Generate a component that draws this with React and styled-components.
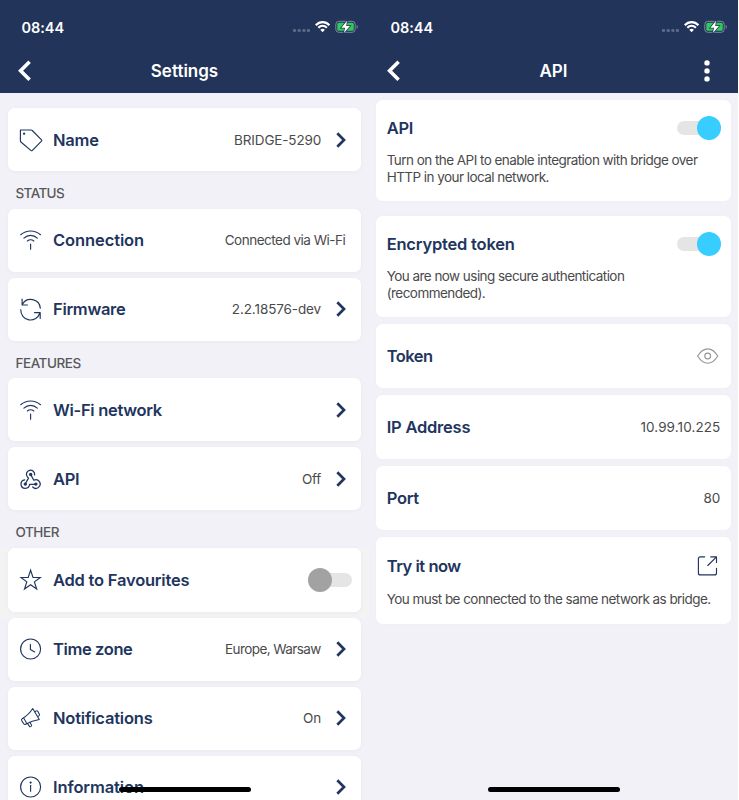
import React from "react";
import styled, { createGlobalStyle, css } from "styled-components";

const NAVY = "#22345a";
const INK = "#21355e";

const GlobalStyle = createGlobalStyle`
  * { box-sizing: border-box; }
  html, body { margin: 0; padding: 0; }
  body { width: 739px; height: 800px; overflow: hidden; background: #fff; }
`;

const Page = styled.main`
  display: flex;
  width: 738.5px;
  height: 800px;
  font-family: Inter, "Liberation Sans", sans-serif;
  overflow: hidden;
`;

const Screen = styled.section`
  position: relative;
  flex: none;
  display: flex;
  flex-direction: column;
  width: 369px;
  height: 800px;
  overflow: hidden;
  background: #f2f1f7;
`;

const Header = styled.header`
  flex: none;
  height: 92.5px;
  background: ${NAVY};
  color: #fff;
`;

const StatusBar = styled.div`
  display: flex;
  align-items: center;
  justify-content: space-between;
  height: 54px;
  padding: 0 11px 0 21.5px;
`;

const Clock = styled.time`
  font-size: 14.5px;
  font-weight: 600;
  letter-spacing: -0.05px;
`;

const NavBar = styled.div`
  display: grid;
  grid-template-columns: 48px 1fr 48px;
  align-items: center;
  height: 34px;
`;

const NavTitle = styled.h1`
  margin: 0;
  text-align: center;
  font-size: 17px;
  font-weight: 600;
  line-height: 24px;
`;

const NavButton = styled.button`
  display: flex;
  align-items: center;
  justify-content: center;
  width: 48px;
  height: 34px;
  padding: 0 ${(p) => p.$inset || 0}px 0 0;
  border: 0;
  background: none;
  color: inherit;
`;

const Card = styled.div`
  display: flex;
  align-items: center;
  flex: none;
  height: ${(p) => p.$height || 62.7}px;
  border-radius: 6.5px;
  background: #fff;
  box-shadow: 0 1px 4px rgba(60, 60, 90, 0.04);
`;

const SettingsBody = styled.div`
  display: flex;
  flex-direction: column;
  gap: 6.3px;
  padding-top: 15.9px;
`;

const Band = styled.div`
  display: flex;
  flex-direction: column;
  gap: 6.3px;
  padding: 0 7.6px 0 8px;
  ${(p) =>
    p.$tinted &&
    css`
      padding-bottom: 6.3px;
      margin-bottom: -6.3px;
      background: #f3f3f4;
    `}
`;

const SectionTitle = styled.h2`
  margin: -6.3px 0;
  padding-left: 15.5px;
  height: 37.8px;
  font-size: 13.5px;
  font-weight: 550;
  line-height: ${(p) => p.$line || 45}px;
  color: #58585b;
  letter-spacing: ${(p) => p.$track}px;
`;

const RowIcon = styled.span`
  display: flex;
  flex: none;
  width: 24px;
  margin: 0 11px 0 10px;
  color: ${INK};
`;

const Label = styled.span`
  flex: 1;
  font-size: 16.5px;
  font-weight: 600;
  line-height: 24px;
  white-space: nowrap;
  color: ${INK};
  letter-spacing: ${(p) => p.$track}px;
`;

const Value = styled.span`
  font-size: 13.5px;
  font-weight: 430;
  line-height: 20px;
  white-space: nowrap;
  color: #4a4a4c;
  letter-spacing: ${(p) => p.$track || 0}px;
  margin-right: ${(p) => p.$edge - (p.$track || 0)}px;
`;

const Chevron = styled.span`
  display: flex;
  flex: none;
  width: 12px;
  margin-right: 14.6px;
  color: ${INK};
`;

const Switch = styled.span`
  display: flex;
  flex: none;
  align-items: center;
  justify-content: ${(p) => (p.$on ? "flex-end" : "flex-start")};
  width: 43.5px;
  height: 14px;
  margin-right: 9.7px;
  border-radius: 7px;
  background: #e5e5e5;
`;

const Knob = styled.span`
  flex: none;
  width: 24px;
  height: 24px;
  border-radius: 50%;
  background: ${(p) => (p.$on ? "#37cdff" : "#a2a2a2")};
`;

const ApiBody = styled.div`
  display: flex;
  flex-direction: column;
  gap: 7px;
  padding: 7.5px 7.5px 0 7px;
`;

const Panel = styled(Card)`
  flex-direction: column;
  align-items: stretch;
  justify-content: flex-start;
  padding-top: ${(p) => p.$top || 0}px;
  padding-left: 10.7px;
  box-shadow: 0 0 2px rgba(60, 60, 90, 0.03);
  margin-bottom: ${(p) => p.$after || 0}px;
`;

const PanelRow = styled.div`
  display: flex;
  align-items: center;
  flex: none;
  height: ${(p) => p.$height || 64}px;
`;

const PanelIcon = styled.span`
  display: flex;
  flex: none;
  width: 24px;
  margin-right: 11.3px;
`;

const Description = styled.p`
  margin: ${(p) => p.$gap}px 0 0;
  font-size: 13.5px;
  font-weight: 430;
  line-height: 17px;
  letter-spacing: -0.55px;
  white-space: pre-line;
  color: #4a4a4c;
`;

const HomeIndicator = styled.div`
  position: absolute;
  left: 119px;
  bottom: 8px;
  width: 132px;
  height: 5px;
  border-radius: 3px;
  background: #000;
`;

const LineIcon = ({ children, width = 1.15, join = "round" }) => (
  <svg
    width="24"
    height="24"
    viewBox="-0.5 0 24 24"
    overflow="visible"
    fill="none"
    stroke="currentColor"
    strokeWidth={width}
    strokeLinecap="round"
    strokeLinejoin={join}
  >
    {children}
  </svg>
);

const TagIcon = () => (
  <LineIcon>
    <path d="M1.9 2H12.6Q13.3 2 13.8 2.5L23 11.8Q23.6 12.5 23 13.2L13.9 22.4Q13.1 23.1 12.3 22.4L2.4 14Q1.9 13.5 1.9 12.9Z" />
    <circle cx="5.6" cy="5.7" r=".55" fill="currentColor" />
  </LineIcon>
);

const AntennaIcon = () => (
  <LineIcon>
    <path d="M2.2 6.7Q6.5 3 12.1 3T22 6.7M5.4 10.1Q8.3 7.3 12.1 7.3T18.8 10.1M8.9 13Q10.3 11.7 12.1 11.7T15.3 13M12.1 16V21.2" />
  </LineIcon>
);

const SyncIcon = () => (
  <LineIcon>
    <path d="M3.6 2.1V8H8.9M3.8 7.4A9.6 9.6 0 0 1 21.8 11.2M21.7 21.4V15.6H16M21.3 16A9.7 9.7 0 0 1 2.3 12.7" />
  </LineIcon>
);

const WebhookIcon = () => (
  <LineIcon width={1.25}>
    <path d="M8.9 9.9A4.1 4.1 0 1 1 16.1 7.9M8.9 9.9L10 11.1L6.8 16.8" />
    <path d="M12.2 7.5L15.3 13.2A4.3 4.3 0 1 1 14.2 20" />
    <path d="M6.2 12.8A4.3 4.3 0 1 0 11.1 17.3H17" />
    <circle cx="12.2" cy="7.5" r="1.1" fill="currentColor" />
    <circle cx="6.8" cy="17.1" r="1.1" fill="currentColor" />
    <circle cx="17.4" cy="17.1" r="1.1" fill="currentColor" />
  </LineIcon>
);

const StarIcon = () => (
  <LineIcon join="miter">
    <path d="M12.1 2.2L14.5 9.5H21.8L15.9 13.9L18.2 21L12.1 16.7L6 21L8.3 13.9L2.5 9.5H9.7Z" />
  </LineIcon>
);

const TimeIcon = () => (
  <LineIcon>
    <circle cx="12.1" cy="12" r="10" />
    <path d="M11.9 7.4V12.4L16.2 15" />
  </LineIcon>
);

const MegaphoneIcon = () => (
  <LineIcon width={1.05}>
    <path d="M14.2 2.6L20.8 13.4Q13.5 14.5 7.2 18.2Q6 18.8 5.2 17.7L3.2 14.6Q2.6 13.5 3.7 12.8Q10.5 8.7 14.2 2.6Z" />
    <path d="M5.2 12.1L8.3 17.5M9 17.4L10.9 20.4Q11.3 21 12 20.6L12.8 20.1Q13.4 19.7 13 19.1L11.4 16.3M16.2 5.7L17.8 4.9Q18.8 4.6 19.4 5.5L20.9 8.2Q21.3 9 20.6 9.6L19.2 10.7" />
  </LineIcon>
);

const InfoIcon = () => (
  <LineIcon>
    <circle cx="12.1" cy="12" r="10" />
    <path d="M12.1 10.3V16.3" />
    <circle cx="12.1" cy="7.5" r=".55" fill="currentColor" />
  </LineIcon>
);

const EyeIcon = () => (
  <LineIcon>
    <g stroke="#97979a">
      <path d="M2.1 12Q6.6 4.8 12.2 4.8T22.3 12Q17.8 19.2 12.2 19.2T2.1 12Z" />
      <circle cx="12.2" cy="12" r="2.9" />
    </g>
  </LineIcon>
);

const ShareIcon = () => (
  <LineIcon>
    <g stroke={INK}>
      <path d="M9.2 2.8H4.9Q2.9 2.8 2.9 4.8V18.9Q2.9 20.9 4.9 20.9H19Q21 20.9 21 18.9V14.2M15.2 2.8H21V8.6M21 2.8L12.3 11.5" />
    </g>
  </LineIcon>
);

const ChevronIcon = () => (
  <svg width="12" height="18" viewBox="0 0 12 18" fill="none">
    <path d="M2.3 2.3L9 9L2.3 15.7" stroke="currentColor" strokeWidth="2.7" />
  </svg>
);

const BackIcon = () => (
  <svg width="16" height="24" viewBox="0 0 16 24" fill="none">
    <path d="M13.6 2.8L4.6 11.8L13.6 20.8" stroke="currentColor" strokeWidth="3.6" />
  </svg>
);

const MoreIcon = () => (
  <svg width="8" height="24" viewBox="0 0 8 24" fill="currentColor">
    <circle cx="4" cy="3.9" r="2.7" />
    <circle cx="4" cy="11.9" r="2.7" />
    <circle cx="4" cy="19.9" r="2.7" />
  </svg>
);

const StatusIcons = () => (
  <svg width="66" height="14" viewBox="0 0 66 14" fill="none">
    <g fill="#596887">
      <rect x="0.9" y="9" width="3.2" height="3" rx="1" />
      <rect x="5.6" y="9" width="3.2" height="3" rx="1" />
      <rect x="10.3" y="9" width="3.2" height="3" rx="1" />
      <rect x="14.8" y="9" width="3.2" height="3" rx="1" />
    </g>
    <g stroke="#fff" strokeWidth="2.1">
      <path d="M23.8 5.2Q26.7 2.1 30.6 2.1T37.4 5.2" />
      <path d="M26.3 7.8Q28.2 5.8 30.6 5.8T34.9 7.8" />
    </g>
    <path d="M28.3 9.8Q30.6 7.8 32.9 9.8L30.6 12.2Z" fill="#fff" />
    <rect x="43.8" y="1.3" width="19.4" height="11" rx="3" stroke="#7d899f" />
    <path d="M65 5.3Q66 6.9 65 8.5Z" fill="#7d899f" stroke="#7d899f" strokeWidth=".5" />
    <rect x="45.3" y="2.8" width="16.4" height="8" rx="1.5" fill="#31cb5b" />
    <path d="M55 0.8L49.4 7.7H53L52 13L58 6H54.2Z" fill="#fff" stroke={NAVY} strokeWidth="1.5" paintOrder="stroke" />
  </svg>
);

const ScreenHeader = ({ title, menu }) => (
  <Header>
    <StatusBar>
      <Clock>08:44</Clock>
      <StatusIcons />
    </StatusBar>
    <NavBar>
      <NavButton aria-label="Back"><BackIcon /></NavButton>
      <NavTitle>{title}</NavTitle>
      {menu && <NavButton $inset={15} aria-label="More"><MoreIcon /></NavButton>}
    </NavBar>
  </Header>
);

const Toggle = ({ on }) => (
  <Switch $on={on} role="switch" aria-checked={!!on}>
    <Knob $on={on} />
  </Switch>
);

const SettingRow = ({ icon: Icon, label, track, value, valueTrack, toggle, plain }) => (
  <Card $height={toggle ? 64 : 62.7}>
    <RowIcon><Icon /></RowIcon>
    <Label $track={track}>{label}</Label>
    {value && <Value $track={valueTrack} $edge={plain ? 15.7 : 13.6}>{value}</Value>}
    {toggle ? <Toggle /> : !plain && <Chevron><ChevronIcon /></Chevron>}
  </Card>
);

export default function App() {
  return (
    <>
      <GlobalStyle />
      <Page>
        <Screen>
          <ScreenHeader title="Settings" />
          <SettingsBody>
            <Band>
              <SettingRow icon={TagIcon} label="Name" track={-0.2} value="BRIDGE-5290" valueTrack={-0.15} />
            </Band>
            <SectionTitle $track={-0.62} $line={45.5}>STATUS</SectionTitle>
            <Band>
              <SettingRow icon={AntennaIcon} label="Connection" track={-0.1} value="Connected via Wi-Fi" valueTrack={-0.5} plain />
              <SettingRow icon={SyncIcon} label="Firmware" track={-0.3} value="2.2.18576-dev" valueTrack={-0.1} />
            </Band>
            <SectionTitle $track={-0.47} $line={44.5}>FEATURES</SectionTitle>
            <Band>
              <SettingRow icon={AntennaIcon} label="Wi-Fi network" track={-0.3} />
              <SettingRow icon={WebhookIcon} label="API" track={-0.3} value="Off" valueTrack={-0.3} />
            </Band>
            <SectionTitle $track={-0.45} $line={45.5}>OTHER</SectionTitle>
            <Band $tinted>
              <SettingRow icon={StarIcon} label="Add to Favourites" track={-0.22} toggle />
            </Band>
            <Band>
              <SettingRow icon={TimeIcon} label="Time zone" track={-0.38} value="Europe, Warsaw" valueTrack={-0.6} />
              <SettingRow icon={MegaphoneIcon} label="Notifications" track={-0.2} value="On" />
              <SettingRow icon={InfoIcon} label="Information" track={-0.1} />
            </Band>
          </SettingsBody>
          <HomeIndicator />
        </Screen>
        <Screen>
          <ScreenHeader title="API" menu />
          <ApiBody>
            <Panel $height={101} $top={12} $after={8.3}>
              <PanelRow $height={32}>
                <Label $track={-0.3}>API</Label>
                <Toggle on />
              </PanelRow>
              <Description $gap={8}>{"Turn on the API to enable integration with bridge over\nHTTP in your local network."}</Description>
            </Panel>
            <Panel $height={101} $top={12}>
              <PanelRow $height={32}>
                <Label $track={-0.2}>Encrypted token</Label>
                <Toggle on />
              </PanelRow>
              <Description $gap={8}>{"You are now using secure authentication\n(recommended)."}</Description>
            </Panel>
            <Panel $height={64}>
              <PanelRow>
                <Label $track={-0.5}>Token</Label>
                <PanelIcon><EyeIcon /></PanelIcon>
              </PanelRow>
            </Panel>
            <Panel $height={64}>
              <PanelRow>
                <Label $track={-0.22}>IP Address</Label>
                <Value $track={0.1} $edge={10.2}>10.99.10.225</Value>
              </PanelRow>
            </Panel>
            <Panel $height={64}>
              <PanelRow>
                <Label $track={-0.3}>Port</Label>
                <Value $edge={10.2}>80</Value>
              </PanelRow>
            </Panel>
            <Panel $height={86.5} $top={13}>
              <PanelRow $height={32}>
                <Label $track={-0.46}>Try it now</Label>
                <PanelIcon><ShareIcon /></PanelIcon>
              </PanelRow>
              <Description $gap={8.5}>You must be connected to the same network as bridge.</Description>
            </Panel>
          </ApiBody>
          <HomeIndicator />
        </Screen>
      </Page>
    </>
  );
}
